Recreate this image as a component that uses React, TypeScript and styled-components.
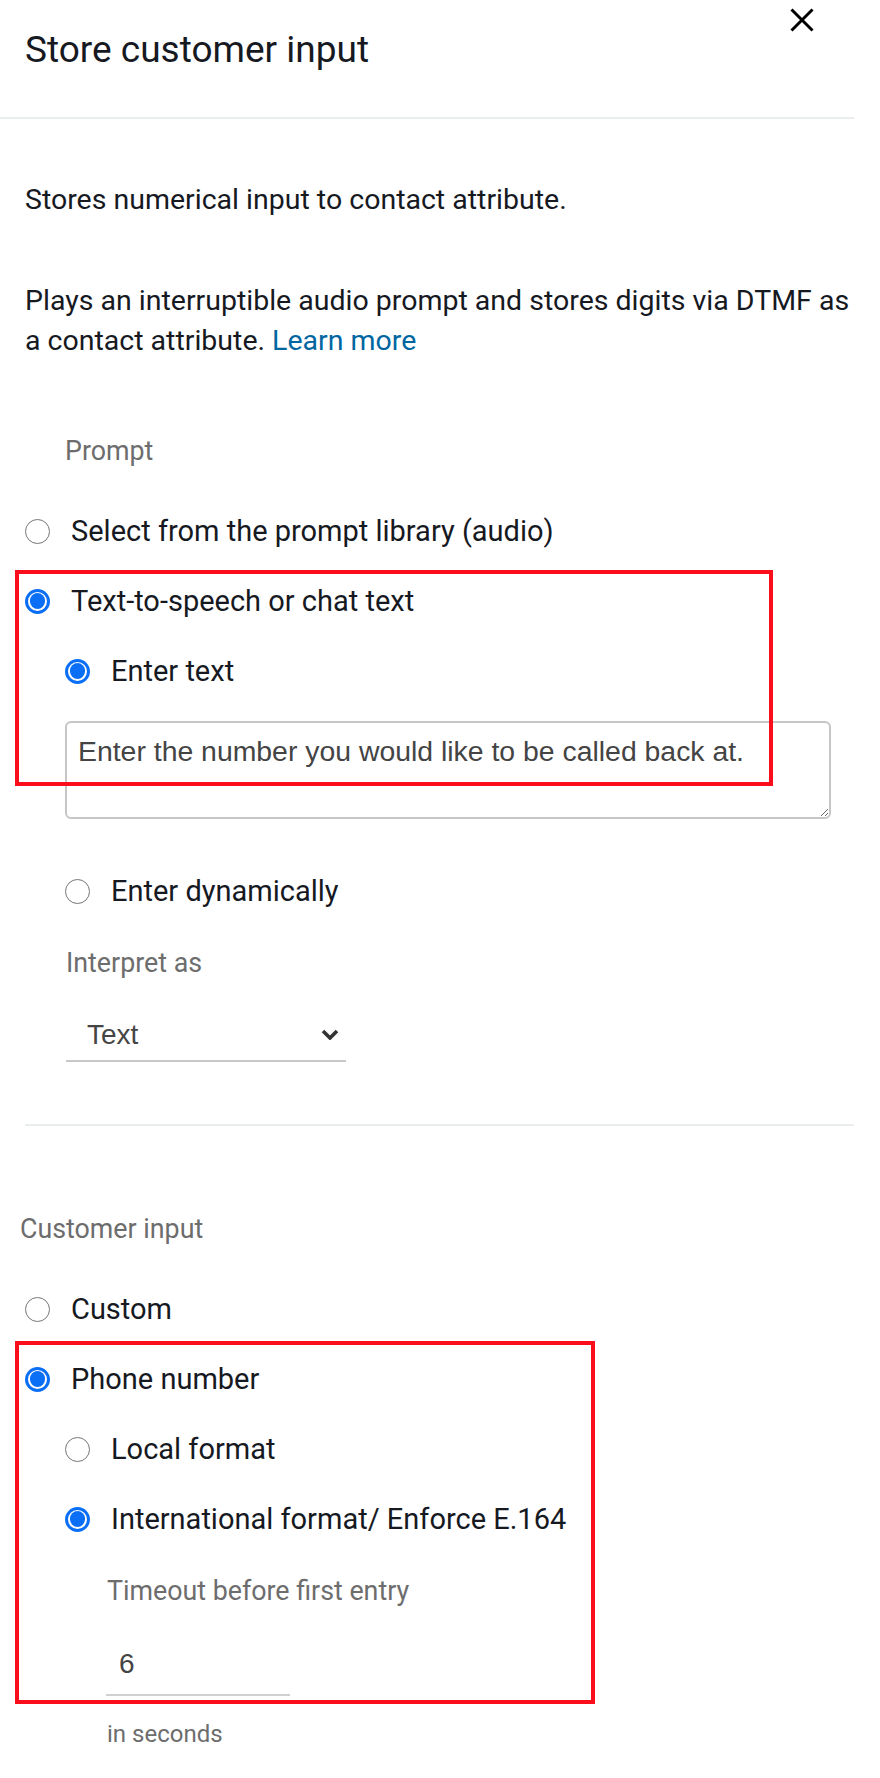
import React from "react";
import styled, { createGlobalStyle } from "styled-components";

const GlobalStyle = createGlobalStyle`
  *, *::before, *::after {
    box-sizing: border-box;
  }

  body {
    margin: 0;
    background: #ffffff;
    font-family: Roboto, "Liberation Sans", Arial, sans-serif;
    color: #16191f;
  }
`;

type RadioProps = {
  label: string;
  checked?: boolean;
  top?: number;
};

const RadioOption = ({ label, checked = false, top = 0 }: RadioProps) => {
  return (
    <RadioRow $top={top}>
      <RadioCircle $checked={checked} />
      <RadioText>{label}</RadioText>
    </RadioRow>
  );
};

const CloseIcon = () => (
  <svg width="24" height="24" viewBox="0 0 24 24">
    <path d="M1.5 1.5 L22.5 22.5 M22.5 1.5 L1.5 22.5" stroke="#000" strokeWidth="3" fill="none" />
  </svg>
);

const ChevronIcon = () => (
  <svg width="18" height="11" viewBox="0 0 18 11">
    <polyline points="2,2 9,9 16,2" stroke="#333" strokeWidth="3.6" fill="none" />
  </svg>
);

const App = () => {
  return (
    <>
      <GlobalStyle />
      <Panel>
        <Header>
          <Title>Store customer input</Title>
          <CloseButton aria-label="Close">
            <CloseIcon />
          </CloseButton>
        </Header>

        <Body>
          <Description $top={61}>Stores numerical input to contact attribute.</Description>
          <Description $top={61}>
            Plays an interruptible audio prompt and stores digits via DTMF as a contact attribute.{" "}
            <LearnMore href="#">Learn more</LearnMore>
          </Description>

          <FieldLabel $indent={40} $top={70}>
            Prompt
          </FieldLabel>
          <Options>
            <RadioOption label="Select from the prompt library (audio)" />
            <RadioOption checked label="Text-to-speech or chat text" />
            <SubOptions>
              <RadioOption checked label="Enter text" />
              <PromptText
                readOnly
                defaultValue="Enter the number you would like to be called back at."
              />
              <RadioOption label="Enter dynamically" top={52} />
              <FieldLabel $indent={1} $top={32}>
                Interpret as
              </FieldLabel>
              <Dropdown>
                <span>Text</span>
                <ChevronIcon />
              </Dropdown>
            </SubOptions>
          </Options>

          <Divider />

          <FieldLabel $indent={-5} $top={83}>
            Customer input
          </FieldLabel>
          <Options>
            <RadioOption label="Custom" />
            <RadioOption checked label="Phone number" />
            <SubOptions>
              <RadioOption label="Local format" />
              <RadioOption checked label="International format/ Enforce E.164" top={30} />
              <FieldLabel $indent={42} $top={32}>
                Timeout before first entry
              </FieldLabel>
              <TimeoutInput readOnly defaultValue="6" />
              <HintText>in seconds</HintText>
            </SubOptions>
          </Options>
        </Body>

        <Highlight $left={15} $top={570} $width={758} $height={216} />
        <Highlight $left={15} $top={1341} $width={580} $height={363} />
      </Panel>
    </>
  );
};

export default App;

// styled component

const Panel = styled.div`
  position: relative;
  width: 854px;
  min-height: 1778px;
  background: #ffffff;
`;

const Header = styled.header`
  display: flex;
  align-items: flex-start;
  justify-content: space-between;
  height: 119px;
  padding: 0 32px 0 25px;
  border-bottom: 2px solid #eaeded;
`;

const Title = styled.h2`
  margin: 28px 0 0 0;
  font-size: 37px;
  line-height: 44px;
  font-weight: 400;
  color: #16191f;
`;

const CloseButton = styled.button`
  display: flex;
  align-items: center;
  justify-content: center;
  width: 40px;
  height: 40px;
  padding: 0;
  border: none;
  background: transparent;
  cursor: pointer;
`;

const Body = styled.div`
  display: flex;
  flex-direction: column;
  padding: 0 0 24px 25px;
`;

const Description = styled.p<{ $top: number }>`
  margin: ${(p) => p.$top}px 0 0 0;
  font-size: 28.5px;
  line-height: 40px;
  color: #16191f;
`;

const LearnMore = styled.a`
  color: #0066a1;
  text-decoration: none;
`;

const FieldLabel = styled.div<{ $indent: number; $top: number }>`
  margin: ${(p) => p.$top}px 0 0 ${(p) => p.$indent}px;
  font-size: 26.8px;
  line-height: 40px;
  color: #6d6d6d;
`;

const HintText = styled.div`
  margin: 18px 0 0 42px;
  font-size: 24px;
  line-height: 40px;
  color: #6d6d6d;
`;

const Options = styled.div`
  display: flex;
  flex-direction: column;
  gap: 30px;
  margin-top: 40px;
`;

const SubOptions = styled.div`
  display: flex;
  flex-direction: column;
  padding-left: 40px;
`;

const RadioRow = styled.label<{ $top: number }>`
  display: flex;
  align-items: center;
  gap: 21px;
  height: 40px;
  margin-top: ${(p) => p.$top}px;
`;

const RadioCircle = styled.span<{ $checked: boolean }>`
  position: relative;
  flex: 0 0 auto;
  width: 25px;
  height: 25px;
  border-radius: 50%;
  border: ${(p) => (p.$checked ? "3.3px solid #0b6ff6" : "1.6px solid #767676")};
  background: #ffffff;

  &::after {
    content: "";
    display: ${(p) => (p.$checked ? "block" : "none")};
    position: absolute;
    inset: 1.9px;
    border-radius: 50%;
    background: #0b6ff6;
  }
`;

const RadioText = styled.span`
  font-size: 29px;
  line-height: 40px;
  color: #16191f;
  white-space: nowrap;
`;

const PromptText = styled.textarea`
  display: block;
  width: 766px;
  height: 98px;
  margin-top: 30px;
  padding: 12px 11px;
  border: 2px solid #c6c6c6;
  border-radius: 6px;
  font-family: "Liberation Sans", Arial, sans-serif;
  font-size: 28.4px;
  color: #444444;
  background: #ffffff;
  outline: none;
  resize: vertical;
`;

const Dropdown = styled.div`
  display: flex;
  align-items: center;
  justify-content: space-between;
  width: 280px;
  height: 53px;
  margin: 26px 0 0 1px;
  padding: 0 7px 0 21px;
  border-bottom: 2px solid #c8c8c8;
  font-family: "Liberation Sans", Arial, sans-serif;
  font-size: 28px;
  color: #454545;
`;

const Divider = styled.hr`
  width: 100%;
  height: 2px;
  margin: 62px 0 0 0;
  border: none;
  background: #eaeded;
`;

const TimeoutInput = styled.input`
  display: block;
  width: 184px;
  height: 52px;
  margin: 33px 0 0 41px;
  padding: 0 0 10px 13px;
  border: none;
  border-bottom: 2px solid #d0d0d0;
  font-family: "Liberation Sans", Arial, sans-serif;
  font-size: 28px;
  color: #444444;
  background: transparent;
  outline: none;
`;

const Highlight = styled.div<{ $left: number; $top: number; $width: number; $height: number }>`
  position: absolute;
  left: ${(p) => p.$left}px;
  top: ${(p) => p.$top}px;
  width: ${(p) => p.$width}px;
  height: ${(p) => p.$height}px;
  border: 4.4px solid #fc0d1b;
  pointer-events: none;
`;
